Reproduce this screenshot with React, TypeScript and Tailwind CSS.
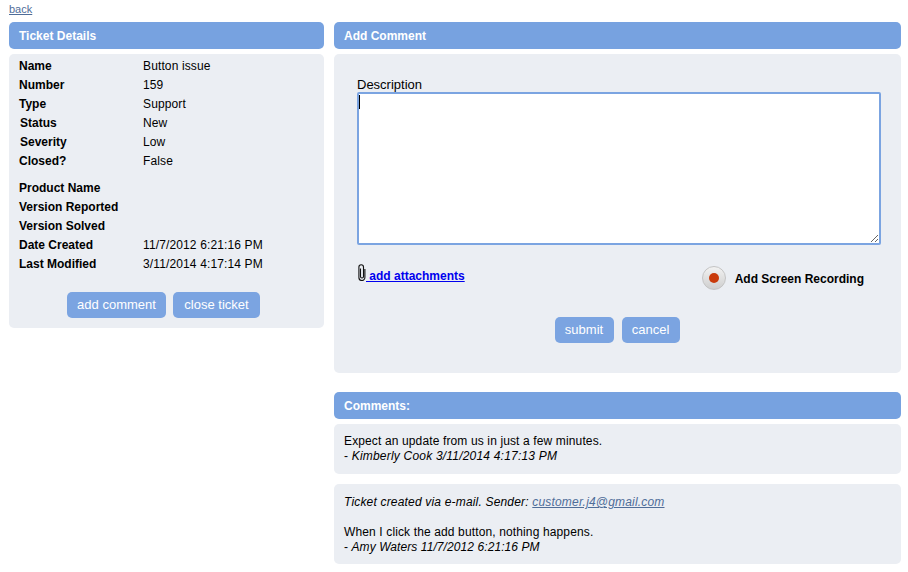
const font = "font-['Liberation_Sans',Arial,sans-serif]";

const topRows = [
  { label: "Name", value: "Button issue" },
  { label: "Number", value: "159" },
  { label: "Type", value: "Support" },
  { label: "Status", value: "New", nudge: true },
  { label: "Severity", value: "Low", nudge: true },
  { label: "Closed?", value: "False" },
];

const bottomRows = [
  { label: "Product Name", value: "" },
  { label: "Version Reported", value: "" },
  { label: "Version Solved", value: "" },
  { label: "Date Created", value: "11/7/2012 6:21:16 PM" },
  { label: "Last Modified", value: "3/11/2014 4:17:14 PM" },
];

function Header({ title }: { title: string }) {
  return (
    <div className="h-[27px] rounded-[5px] bg-[#77a2e0] pl-[10px] text-[12px] leading-[28px] font-bold text-white">
      {title}
    </div>
  );
}

function BlueButton({ label, width }: { label: string; width: string }) {
  return (
    <button
      type="button"
      className={`h-[26px] rounded-[5px] bg-[#7ba4e1] text-center text-[13px] leading-[26px] text-white ${width}`}
    >
      {label}
    </button>
  );
}

function DetailRow({ label, value, nudge }: { label: string; value: string; nudge?: boolean }) {
  return (
    <div className="flex h-[19px] items-center">
      <div className={`w-[124px] font-bold ${nudge ? "pl-px" : ""}`}>{label}</div>
      <div className="tracking-[0.13px]">{value}</div>
    </div>
  );
}

function PaperClip() {
  return (
    <svg width="8" height="17" viewBox="0 0 8 17" fill="none" stroke="#111" strokeWidth="1.1" className="ml-px shrink-0">
      <path d="M2.5 4.500v8a1.500 1.500 0 0 0 3 0V3a2.300 2.300 0 0 0-4.600 0v10.500a3 3 0 0 0 6 0V5" />
    </svg>
  );
}

function RecordButton() {
  return (
    <div className="flex h-6 w-6 items-center justify-center rounded-full border border-[#c4c4c4] bg-gradient-to-b from-[#f2f2f2] to-[#cfcfcf]">
      <div className="h-[10px] w-[10px] rounded-full bg-[#c93a0a]" />
    </div>
  );
}

export default function App() {
  return (
    <div className={`${font} h-[572px] w-[908px] overflow-hidden bg-white pt-[3px] pl-[9px] text-[12px] text-black`}>
      <a href="#" className="block h-[19px] text-[11px] leading-[13px] text-[#4f6d99] underline">
        back
      </a>

      <div className="flex gap-[10px]">
        {/* Ticket details */}
        <div className="w-[315px] shrink-0">
          <Header title="Ticket Details" />
          <div className="mt-[5px] rounded-[5px] bg-[#ebeef3] pt-[2px] pb-[10px] pl-[10px]">
            {topRows.map((row) => (
              <DetailRow key={row.label} {...row} />
            ))}
            <div className="mt-2">
              {bottomRows.map((row) => (
                <DetailRow key={row.label} {...row} />
              ))}
            </div>
            <div className="mt-[19px] flex justify-center gap-[7px] pr-[16px]">
              <BlueButton label="add comment" width="w-[99px]" />
              <BlueButton label="close ticket" width="w-[87px]" />
            </div>
          </div>
        </div>

        {/* Add comment + comments */}
        <div className="w-[567px] shrink-0">
          <Header title="Add Comment" />
          <div className="mt-[5px] h-[319px] rounded-[5px] bg-[#ebeef3] px-[23px] pt-[24px]">
            <div className="h-[14px] text-[13px] leading-[14px]">Description</div>
            <div className="relative w-[524px]">
              <textarea className="block h-[153px] w-full rounded-[2px] border-2 border-[#7ba4e1] bg-white outline-none" />
              <div className="absolute top-[3px] left-[2px] h-[14px] w-px bg-black" />
            </div>
            <div className="mt-[19px] flex h-[20px] w-[524px] items-start justify-between">
              <a href="#" className="flex items-start font-bold text-[#0000ee]">
                <PaperClip />
                <span className="mt-[5px] leading-[14px] whitespace-pre underline"> add attachments</span>
              </a>
              <div className="mr-[17px] flex items-center gap-[9px] pt-[2px] font-bold">
                <RecordButton />
                <span className="pt-[2px]">Add Screen Recording</span>
              </div>
            </div>
            <div className="mt-[33px] flex justify-center gap-[8px] pr-[1px]">
              <BlueButton label="submit" width="w-[59px]" />
              <BlueButton label="cancel" width="w-[58px]" />
            </div>
          </div>

          <div className="mt-[19px]">
            <Header title="Comments:" />
          </div>
          <div className="mt-[5px] h-[50px] rounded-[5px] bg-[#ebeef3] px-[10px] pt-[10px] leading-[15px] tracking-[0.13px]">
            <div>Expect an update from us in just a few minutes.</div>
            <div className="tracking-[0.2px]">
              - <i>Kimberly Cook 3/11/2014 4:17:13 PM</i>
            </div>
          </div>
          <div className="mt-[10px] h-[80px] rounded-[5px] bg-[#ebeef3] px-[10px] pt-[11px] leading-[15px] tracking-[0.13px]">
            <div className="tracking-[0.18px]">
              <i>
                Ticket created via e-mail. Sender:{" "}
                <a href="#" className="text-[#4f6d99] underline">
                  customer.j4@gmail.com
                </a>
              </i>
            </div>
            <div className="mt-[15px]">When I click the add button, nothing happens.</div>
            <div className="tracking-[0.08px]">
              - <i>Amy Waters 11/7/2012 6:21:16 PM</i>
            </div>
          </div>
        </div>
      </div>
    </div>
  );
}
